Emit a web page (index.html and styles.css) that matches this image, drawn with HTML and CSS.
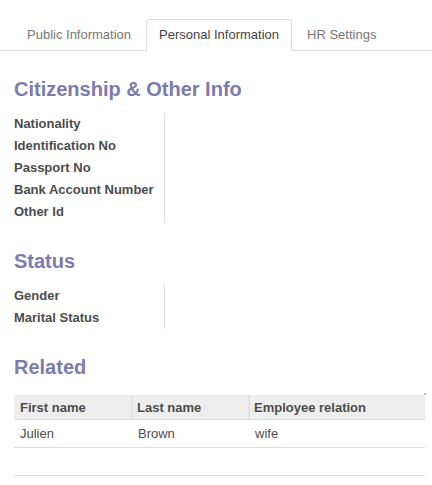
FILE: index.html
```html
<!DOCTYPE html>
<html>
<head>
<meta charset="utf-8">
<link rel="stylesheet" href="styles.css">
</head>
<body>
<ul class="tabs">
  <li class="tab">Public Information</li>
  <li class="tab active">Personal Information</li>
  <li class="tab">HR Settings</li>
</ul>
<div class="sheet">
  <h2 class="sep">Citizenship &amp; Other Info</h2>
  <div class="group">
    <div class="labels">
      <div class="lbl">Nationality</div>
      <div class="lbl">Identification No</div>
      <div class="lbl">Passport No</div>
      <div class="lbl">Bank Account Number</div>
      <div class="lbl">Other Id</div>
    </div>
  </div>
  <h2 class="sep">Status</h2>
  <div class="group">
    <div class="labels">
      <div class="lbl">Gender</div>
      <div class="lbl">Marital Status</div>
    </div>
  </div>
  <h2 class="sep">Related</h2>
  <div class="table-wrap">
    <span class="handle"></span>
    <table class="list">
      <thead>
        <tr><th class="c1">First name</th><th class="c2">Last name</th><th class="c3">Employee relation</th></tr>
      </thead>
      <tbody>
        <tr><td>Julien</td><td>Brown</td><td>wife</td></tr>
        <tr class="empty"><td></td><td></td><td></td></tr>
      </tbody>
    </table>
  </div>
</div>
</body>
</html>
```

FILE: styles.css
```css
html, body {
  margin: 0;
  padding: 0;
  background: #fff;
  font-family: "Liberation Sans", Arial, sans-serif;
  font-size: 13px;
  color: #4c4c4c;
}

.tabs {
  list-style: none;
  margin: 19px 0 0 0;
  padding: 0 0 0 14px;
  display: flex;
  border-bottom: 1px solid #ddd;
}

.tab {
  padding: 6px 12px;
  line-height: 18px;
  margin-right: 2px;
  margin-bottom: -1px;
  border: 1px solid transparent;
  border-radius: 3px 3px 0 0;
  color: #777;
}

.tab.active {
  color: #444;
  background: #fff;
  border-color: #ddd;
  border-bottom-color: #fff;
}

.sheet {
  padding: 0 7px 0 14px;
}

.sep {
  margin: 26px 0 0 0;
  font-size: 20px;
  line-height: 24px;
  font-weight: bold;
  color: #7c7bad;
}

.group {
  margin-top: 12px;
  display: flex;
}

.labels {
  width: 150px;
  border-right: 1px solid #ddd;
}

.lbl {
  line-height: 22px;
  font-weight: bold;
  color: #4c4c4c;
  white-space: nowrap;
}

.table-wrap {
  position: relative;
  margin-top: 16px;
}

.handle {
  position: absolute;
  right: -1px;
  top: -2px;
  width: 2px;
  height: 2px;
  background: #bbb;
}

.list {
  width: 411px;
  border-collapse: collapse;
  table-layout: fixed;
}

.list th {
  background: #eee;
  text-align: left;
  font-weight: bold;
  height: 24px;
  padding: 0 6px;
  border-bottom: 1px solid #ddd;
  color: #4c4c4c;
}

.list th + th {
  border-left: 2px solid #e2e2e2;
  padding-left: 4px;
}

.list th.c1 { width: 105px; }
.list th.c2 { width: 105px; }

.list td {
  height: 26px;
  padding: 0 6px 1px;
  border-bottom: 1px solid #ddd;
  color: #4c4c4c;
}
```
